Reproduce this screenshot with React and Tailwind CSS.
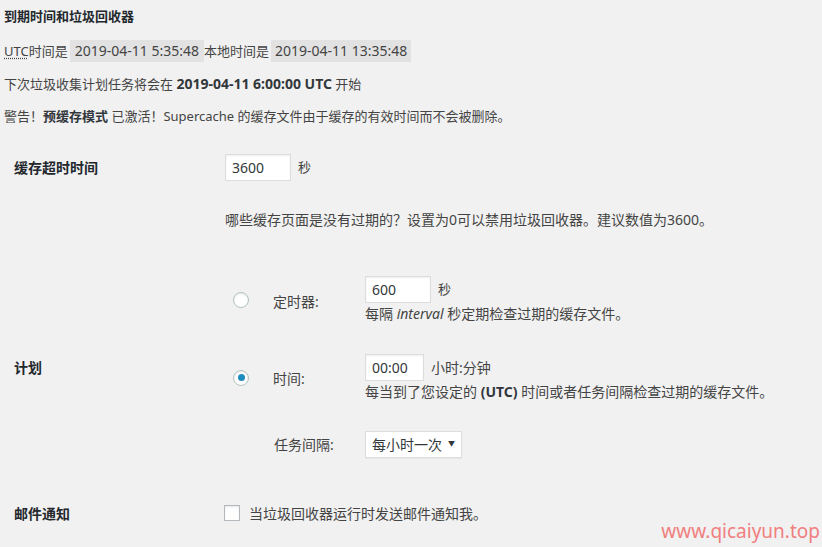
import React from "react";

const font = { fontFamily: '"Noto Sans", "Noto Sans CJK SC", sans-serif' };

function Radio({ checked }) {
  return (
    <span className="flex h-[16px] w-[16px] items-center justify-center rounded-full border border-[#b4c4c0] bg-white shadow-[inset_0_1px_2px_rgba(0,0,0,0.1)]">
      {checked && <span className="h-[7px] w-[7px] rounded-full bg-[#1e8cbe]" />}
    </span>
  );
}

function Input({ value, w }) {
  return (
    <span
      className={`flex h-[27px] items-center border border-[#dddddd] bg-white pl-[6px] text-[14px] text-[#32373c] shadow-[inset_0_1px_2px_rgba(0,0,0,0.07)] ${w}`}
    >
      {value}
    </span>
  );
}

export default function App() {
  return (
    <div
      className="relative min-h-[547px] w-[822px] overflow-hidden bg-[#f1f1f1] text-[13px] text-[#444444]"
      style={font}
    >
      <div className="pl-[4px] pt-[6px]">
        <div className="text-[13px] font-bold leading-[20px] text-[#23282d]">到期时间和垃圾回收器</div>
        <div className="mt-[14px] flex items-center leading-[22px]">
          <span className="underline decoration-dotted underline-offset-2">UTC</span>
          <span>时间是</span>
          <span className="ml-[2px] bg-[#e2e2e2] px-[5px] text-[14px]">2019-04-11 5:35:48</span>
          <span>本地时间是</span>
          <span className="ml-[2px] bg-[#e2e2e2] px-[4px] text-[14px]">2019-04-11 13:35:48</span>
        </div>
        <div className="mt-[12px] leading-[20px]">
          下次垃圾收集计划任务将会在 <b className="text-[14px] text-[#32373c]">2019-04-11 6:00:00 UTC</b> 开始
        </div>
        <div className="mt-[12px] leading-[20px]">
          警告！<b className="text-[#32373c]">预缓存模式</b> 已激活！Supercache 的缓存文件由于缓存的有效时间而不会被删除。
        </div>
      </div>

      <div className="mt-[28px] flex items-center">
        <div className="w-[225px] pl-[14px] text-[14px] font-bold text-[#23282d]">缓存超时时间</div>
        <div className="flex items-center">
          <Input value="3600" w="w-[66px]" />
          <span className="ml-[7px]">秒</span>
        </div>
      </div>
      <div className="mt-[29px] pl-[225px] text-[14px] leading-[20px]">
        哪些缓存页面是没有过期的？设置为0可以禁用垃圾回收器。建议数值为3600。
      </div>

      <div className="mt-[46px] flex items-center">
        <div className="w-[225px] pl-[14px] text-[14px] font-bold text-[#23282d]">计划</div>
        <div className="flex flex-col">
          <div className="flex items-center">
            <div className="w-[48px] pl-[8px]">
              <Radio />
            </div>
            <div className="w-[92px] pt-[3px] text-[14px]">定时器:</div>
            <div className="flex flex-col">
              <div className="flex items-center">
                <Input value="600" w="w-[66px]" />
                <span className="ml-[7px]">秒</span>
              </div>
              <div className="mt-[2px] text-[14px] leading-[18px]">
                每隔 <i>interval</i> 秒定期检查过期的缓存文件。
              </div>
            </div>
          </div>
          <div className="mt-[31px] flex items-center">
            <div className="w-[48px] pl-[8px]">
              <Radio checked />
            </div>
            <div className="w-[92px] pt-[2px] text-[14px]">时间:</div>
            <div className="flex flex-col">
              <div className="flex items-center">
                <Input value="00:00" w="w-[59px]" />
                <span className="ml-[7px] text-[14px]">小时:分钟</span>
              </div>
              <div className="mt-[2px] text-[14px] leading-[18px]">
                每当到了您设定的 <b className="text-[#32373c]">(UTC)</b> 时间或者任务间隔检查过期的缓存文件。
              </div>
            </div>
          </div>
          <div className="mt-[30px] flex items-center">
            <div className="w-[49px]" />
            <div className="w-[91px] text-[14px]">任务间隔:</div>
            <div className="flex h-[27px] w-[97px] items-center justify-between border border-[#dddddd] bg-white pl-[6px] pr-[6px] text-[14px] text-[#32373c] shadow-[0_1px_1px_rgba(0,0,0,0.04)]">
              <span>每小时一次</span>
              <span className="text-[7px]">▼</span>
            </div>
          </div>
        </div>
      </div>

      <div className="mt-[45px] flex h-[20px] items-center">
        <div className="w-[224px] pl-[14px] text-[14px] font-bold text-[#23282d]">邮件通知</div>
        <span className="h-[16px] w-[16px] border border-[#b4b9be] bg-white shadow-[inset_0_1px_2px_rgba(0,0,0,0.1)]" />
        <span className="ml-[9px] text-[14px]">当垃圾回收器运行时发送邮件通知我。</span>
      </div>

      <div className="absolute bottom-[4px] right-[2px] text-[19px] leading-[24px] text-[#f07f7f]">
        www.qicaiyun.top
      </div>
    </div>
  );
}
